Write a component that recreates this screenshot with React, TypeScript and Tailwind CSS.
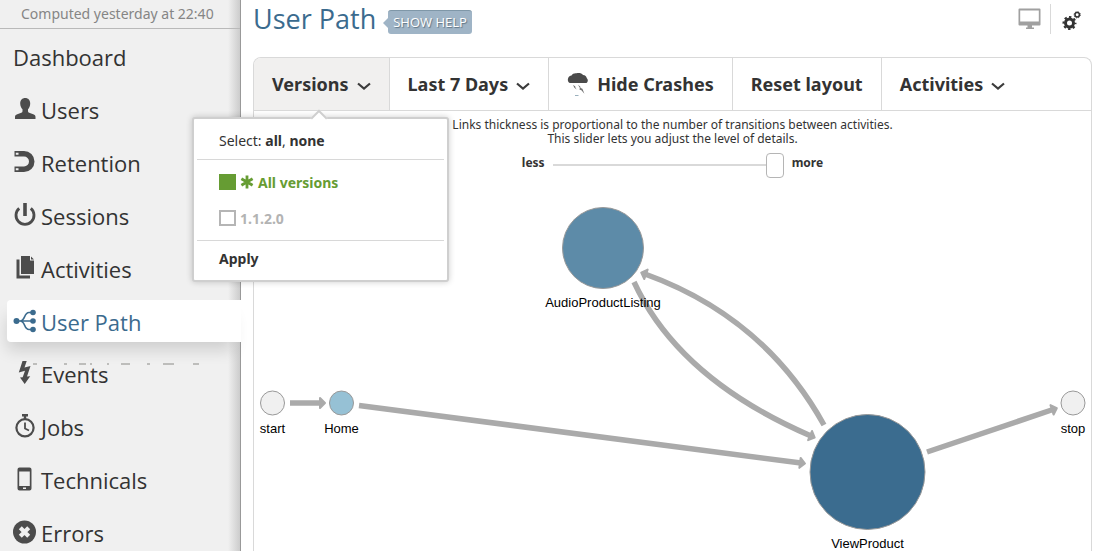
import React, { useState } from "react";

type IconProps = { className?: string };

const UserIcon = ({ className }: IconProps) => (
  <svg viewBox="0 0 24 24" className={className} fill="currentColor" aria-hidden="true">
    <path d="M12.200 1c3 0 5 2.200 5 5.500 0 2.300-.9 4.500-2.200 5.700v2c0 .7.4 1.200 1.200 1.500l4 1.500c1.600.6 2.300 1.400 2.300 2.800V22H2v-2c0-1.400.7-2.200 2.300-2.800l4-1.500c.8-.3 1.200-.8 1.200-1.500v-2c-1.300-1.200-2.300-3.400-2.300-5.700C7.200 3.200 9.200 1 12.200 1z" />
  </svg>
);

const MagnetIcon = ({ className }: IconProps) => (
  <svg viewBox="0 0 24 24" className={className} fill="currentColor" aria-hidden="true">
    <path d="M1.500 1H11a10.500 10.500 0 0 1 0 21H1.500v-5.500H11a5 5 0 0 0 0-10H1.500z" />
    <path d="M2.800 2.800h2.700v2H2.800zM2.800 18.200h2.700v2H2.800z" fill="#efefef" />
  </svg>
);

const PowerIcon = ({ className }: IconProps) => (
  <svg viewBox="0 0 24 24" className={className} fill="none" stroke="currentColor" aria-hidden="true">
    <path d="M6.200 5.400a9 9 0 1 0 11.600 0" strokeWidth="2.800" />
    <path d="M12 0v13" strokeWidth="3.600" />
  </svg>
);

const FilesIcon = ({ className }: IconProps) => (
  <svg viewBox="0 0 24 24" className={className} fill="currentColor" aria-hidden="true">
    <path d="M8 0h9v4.500H21V18H8z" />
    <path d="M18 .5L21 3.500h-3z" />
    <path d="M3.500 3.500h3v16H17v3H3.500z" />
  </svg>
);

const PathIcon = ({ className }: IconProps) => (
  <svg viewBox="0 0 24 24" className={className} fill="currentColor" aria-hidden="true">
    <path d="M4 12h16M7 12c2.500 0 3.500-1.500 4.600-4.200S14.200 3.500 16 3.500h4M7 12c2.500 0 3.500 1.500 4.600 4.200s2.600 4.300 4.400 4.300h4" fill="none" stroke="currentColor" strokeWidth="1.700" />
    <circle cx="3.500" cy="12" r="3" />
    <circle cx="20" cy="3.500" r="2.800" />
    <circle cx="20" cy="12" r="2.800" />
    <circle cx="20" cy="20.500" r="2.800" />
  </svg>
);

const BoltIcon = ({ className }: IconProps) => (
  <svg viewBox="0 0 24 24" className={className} fill="currentColor" aria-hidden="true">
    <path d="M9.500 0h4.200l-2.200 6.500 6-1.500-3.500 10.500 3.200-.2-5.500 7.700-4.700-6.500 2.700-.3L12 9.800l-6.200 1.600z" />
  </svg>
);

const StopwatchIcon = ({ className }: IconProps) => (
  <svg viewBox="0 0 24 24" className={className} fill="none" stroke="currentColor" aria-hidden="true">
    <circle cx="12" cy="13.800" r="8.600" strokeWidth="2.200" />
    <path d="M9 1.200h6M12 1v4" strokeWidth="2.400" />
    <path d="M12 8.500v6l4 2" strokeWidth="1.800" />
  </svg>
);

const PhoneIcon = ({ className }: IconProps) => (
  <svg viewBox="0 0 24 24" className={className} fill="currentColor" aria-hidden="true">
    <path fillRule="evenodd" d="M6.500 0.500h10a2 2 0 0 1 2 2v19a2 2 0 0 1-2 2h-10a2 2 0 0 1-2-2v-19a2 2 0 0 1 2-2zM6.200 4.500v14.500h10.600V4.500zM10 20.500v1.500h3v-1.500z" />
  </svg>
);

const ErrorIcon = ({ className }: IconProps) => (
  <svg viewBox="0 0 24 24" className={className} aria-hidden="true">
    <circle cx="11.500" cy="12" r="11.500" fill="currentColor" />
    <path d="M7.300 7.800l8.400 8.400M15.700 7.800l-8.400 8.400" stroke="#efefef" strokeWidth="4.200" />
  </svg>
);

const ChevronIcon = () => (
  <svg viewBox="0 0 14 10" className="mt-1 h-[10px] w-[14px]" fill="none" stroke="#3c3c3c" strokeWidth="2.200" aria-hidden="true">
    <path d="M1 2.500l6 5 6-5" />
  </svg>
);

const StormIcon = () => (
  <svg viewBox="0 0 22 24" className="h-6 w-[22px]" aria-hidden="true">
    <path fill="#4a4a4a" d="M3 11C.8 10.500.5 7.500 1.200 6 1.800 4.300 3 3.600 4.500 3.500 5.500 1.700 7.500 1 9.500 1.300c2.500-.6 5-.3 6.500 1.700 2.200 0 3.600 1.500 3.700 3C21.300 7.200 21.200 10 19.500 11z" />
    <path fill="#707070" d="M6 13l2.200 1.200.2 1.200 1.200 2.200-2.200-1.800zM11 12.800l2.200 1.600.4 1.700 1.800.6 2 5-3-3.400-2-.8.500-1.400z" />
    <path stroke="#9ab0bd" d="M8 23.500h3.500" />
  </svg>
);

const MonitorIcon = () => (
  <svg viewBox="0 0 24 22" className="h-[22px] w-6" fill="#a0a0a0" aria-hidden="true">
    <path fillRule="evenodd" d="M1.500 0.500h20a1 1 0 0 1 1 1v15a1 1 0 0 1-1 1H14v2h2V21H8v-1.500h1.500v-2h-8a1 1 0 0 1-1-1v-15a1 1 0 0 1 1-1zM2.200 2.500v11h18.600v-11z" />
  </svg>
);

const CogsIcon = () => (
  <svg viewBox="0 0 20 20" className="size-5" fill="none" stroke="#333333" aria-hidden="true">
    <circle cx="7.500" cy="13" r="4" strokeWidth="3" />
    <circle cx="7.500" cy="13" r="6" strokeWidth="2" strokeDasharray="2.400 2.310" strokeDashoffset="1.200" />
    <circle cx="15.200" cy="4.800" r="2.200" strokeWidth="1.500" />
    <circle cx="15.200" cy="4.800" r="3.100" strokeWidth="1" strokeDasharray="1.220 1.220" />
  </svg>
);

const AsteriskIcon = () => (
  <svg viewBox="0 0 14 14" className="size-[14px]" stroke="#669c33" strokeWidth="2.800" aria-hidden="true">
    <path d="M7 0.500v13M1.400 3.700l11.200 6.600M12.600 3.700L1.400 10.300" />
  </svg>
);

const navItems: { label: string; Icon?: React.FC<IconProps> }[] = [
  { label: "Dashboard" },
  { label: "Users", Icon: UserIcon },
  { label: "Retention", Icon: MagnetIcon },
  { label: "Sessions", Icon: PowerIcon },
  { label: "Activities", Icon: FilesIcon },
  { label: "User Path", Icon: PathIcon },
  { label: "Events", Icon: BoltIcon },
  { label: "Jobs", Icon: StopwatchIcon },
  { label: "Technicals", Icon: PhoneIcon },
  { label: "Errors", Icon: ErrorIcon },
];

const Sidebar = () => (
  <aside className="relative w-[241px] shrink-0 border-r border-[#999999] bg-[#f0f0f0]">
    <div className="absolute inset-y-0 right-0 w-3 bg-linear-to-r from-transparent to-[#cccccc]" />
    <p className="relative h-[29px] border-b border-[#b9b9b9] pl-[21px] text-[14px] leading-[27px] text-[#858585]">
      Computed yesterday at 22:40
    </p>
    <nav className="relative -mr-px pt-[6px] font-['Open_Sans',sans-serif]">
      <ul className="flex flex-col gap-[11px]">
        {navItems.map(({ label, Icon }) => {
          const active = label === "User Path";
          return (
            <li key={label} className={label === "Events" ? "relative -mt-px pl-[7px]" : "relative pl-[7px]"}>
              {label === "Events" && (
                <svg viewBox="0 0 180 2" className="absolute top-[11px] left-8 h-[2px] w-[180px]" stroke="#8a8a86" aria-hidden="true">
                  <path d="M1 1h4M32 1h3M47 1h7M58 1h2M75 1h2M89 1h9M115 1h3M131 1h11M161 1h6" />
                </svg>
              )}
              <a
                href="#"
                aria-current={active ? "page" : undefined}
                className={
                  active
                    ? "flex h-[42px] items-center gap-1 rounded-l-[4px] bg-white pl-[6px] text-[22px] text-[#3b6b8e] shadow-[-4px_12px_16px_-4px_rgba(0,0,0,0.14)]"
                    : "flex h-[42px] items-center gap-1 pl-[6px] text-[22px] text-[#333333]"
                }
              >
                {Icon && <Icon className={active ? "size-6" : "size-6 text-[#4c4c4c]"} />}
                <span className="pt-[2px]">{label}</span>
              </a>
            </li>
          );
        })}
      </ul>
    </nav>
  </aside>
);

const VersionsMenu = () => {
  const [all, setAll] = useState(true);
  const [single, setSingle] = useState(false);
  const box =
    "h-4 w-[17px] appearance-none border-2 border-[#b5b5b5] bg-white checked:border-[#669c33] checked:bg-[#669c33]";
  return (
    <div className="absolute top-[59px] -left-[62px] z-10 w-[257px] rounded-[3px] border-2 border-[#cfcfcf] bg-white px-[3px] text-[14px] font-normal text-[#333333] shadow-[0_0_6px_rgba(0,0,0,0.2)]">
      <div className="absolute -top-[7px] left-[119px] size-[12px] rotate-45 border-t-2 border-l-2 border-[#cfcfcf] bg-white" />
      <div className="relative h-[41px] border-b border-[#d8d8d8] pl-[22px] leading-[44px]">
        Select: <button type="button" className="font-bold" onClick={() => { setAll(true); setSingle(true); }}>all</button>,{" "}
        <button type="button" className="font-bold" onClick={() => { setAll(false); setSingle(false); }}>none</button>
      </div>
      <div className="flex h-[81px] flex-col gap-[14px] border-b border-[#d8d8d8] pt-[11px] pl-[22px] font-bold">
        <label className="flex h-[22px] items-center gap-1 text-[#669c33]">
          <input type="checkbox" className={box} checked={all} onChange={() => setAll(!all)} />
          <AsteriskIcon />
          All versions
        </label>
        <label className="flex h-[22px] items-center gap-1 text-[#b3b3b3]">
          <input type="checkbox" className={box} checked={single} onChange={() => setSingle(!single)} />
          1.1.2.0
        </label>
      </div>
      <button type="button" className="block h-[39px] pb-1 pl-[22px] font-bold">Apply</button>
    </div>
  );
};

const Toolbar = () => {
  const item = "flex h-[52px] items-center gap-2 px-[18px]";
  return (
    <div className="flex border-b border-[#d9d9d9] text-[18px] font-bold whitespace-nowrap text-[#333333]">
      <div className="relative rounded-tl-[7px] border-r border-[#d9d9d9] bg-[#f1f0ef]">
        <button type="button" aria-expanded="true" className={item}>Versions <ChevronIcon /></button>
        <VersionsMenu />
      </div>
      <button type="button" className={`${item} border-r border-[#d9d9d9]`}>Last 7 Days <ChevronIcon /></button>
      <button type="button" className={`${item} border-r border-[#d9d9d9]`}><StormIcon /> Hide Crashes</button>
      <button type="button" className={`${item} border-r border-[#d9d9d9]`}>Reset layout</button>
      <button type="button" className={item}>Activities <ChevronIcon /></button>
    </div>
  );
};

const nodes = [
  { label: "start", x: 18.5, y: 292, r: 12, fill: "#f0f0f0", labelY: 322 },
  { label: "Home", x: 87.5, y: 292, r: 12, fill: "#96c1d5", labelY: 322 },
  { label: "AudioProductListing", x: 349, y: 137, r: 40.5, fill: "#5d8ba8", labelY: 196 },
  { label: "ViewProduct", x: 613.5, y: 361, r: 57.5, fill: "#3b6c8f", labelY: 437 },
  { label: "stop", x: 819, y: 292, r: 12, fill: "#f0f0f0", labelY: 322 },
];

const edges = [
  "M36 292H67",
  "M105 294.500L547 352",
  "M380 171Q425 268 557 325",
  "M570 314Q510 206 391 163",
  "M673 341L799 298.500",
];

const Graph = () => (
  <svg viewBox="0 0 837 440" className="absolute inset-x-0 top-0 w-full" role="img" aria-label="User path graph">
    <defs>
      <marker id="head" markerUnits="userSpaceOnUse" markerWidth="10" markerHeight="14" viewBox="-2 -7 10 14" refX="1" refY="0" orient="auto">
        <path d="M0-5L5 0L0 5z" fill="#aaaaaa" stroke="#aaaaaa" strokeWidth="2" strokeLinejoin="round" />
      </marker>
    </defs>
    {edges.map((d) => (
      <path key={d} d={d} fill="none" stroke="#aaaaaa" strokeWidth="5.500" markerEnd="url(#head)" />
    ))}
    {nodes.map((n) => (
      <g key={n.label}>
        <circle cx={n.x} cy={n.y} r={n.r} fill={n.fill} stroke="#999999" />
        <text x={n.x} y={n.labelY} textAnchor="middle" className="fill-black font-['Liberation_Sans',Arial,sans-serif] text-[13px]">
          {n.label}
        </text>
      </g>
    ))}
  </svg>
);

const DetailSlider = () => {
  const [level, setLevel] = useState(100);
  return (
    <div className="relative pt-[7px] text-center text-[12px] leading-[14px] text-[#333333]">
      <p>
        Links thickness is proportional to the number of transitions between activities.
        <br />
        This slider lets you adjust the level of details.
      </p>
      <div className="mt-[6px] flex items-center justify-center gap-2 font-bold">
        <span className="pb-1">less</span>
        <input
          type="range"
          aria-label="Level of details"
          value={level}
          onChange={(e) => setLevel(Number(e.target.value))}
          className="h-[26px] w-[231px] appearance-none bg-transparent [&::-webkit-slider-runnable-track]:h-[2px] [&::-webkit-slider-runnable-track]:bg-[#d9d9d9] [&::-webkit-slider-thumb]:-mt-[11px] [&::-webkit-slider-thumb]:h-[25px] [&::-webkit-slider-thumb]:w-[18px] [&::-webkit-slider-thumb]:appearance-none [&::-webkit-slider-thumb]:rounded-[4px] [&::-webkit-slider-thumb]:border [&::-webkit-slider-thumb]:border-[#b5b5b5] [&::-webkit-slider-thumb]:bg-white"
        />
        <span className="pb-1">more</span>
      </div>
    </div>
  );
};

export default function App() {
  return (
    <div className="flex h-screen overflow-hidden bg-white font-['Noto_Sans',sans-serif]">
      <Sidebar />
      <main className="flex min-w-0 flex-1 flex-col pr-1 pl-3">
        <header className="flex h-[57px] items-start">
          <h1 className="font-['Open_Sans',sans-serif] text-[27px] leading-[38px] text-[#3b6b8e]">User Path</h1>
          <button
            type="button"
            className="relative mt-[10px] ml-3 h-6 rounded-[3px] border-t border-[#7f97a8] bg-[#9fb4c6] px-[5px] font-['Open_Sans',sans-serif] text-[13px] leading-[23px] text-white [text-shadow:1px_1px_1px_#5f7484]"
          >
            <svg viewBox="0 0 5 10" className="absolute top-[7px] -left-[5px] h-[10px] w-[5px]" fill="#9fb4c6" aria-hidden="true">
              <path d="M5 0v10L0 5z" />
            </svg>
            SHOW HELP
          </button>
          <div className="mt-1 mr-[10px] ml-auto flex h-[30px] items-center">
            <button type="button" aria-label="Full screen" className="pr-2">
              <MonitorIcon />
            </button>
            <button type="button" aria-label="Settings" className="flex h-full items-center border-l border-[#d9d9d9] pt-[2px] pl-[11px]">
              <CogsIcon />
            </button>
          </div>
        </header>
        <section className="flex flex-1 flex-col rounded-t-[8px] border border-b-0 border-[#d9d9d9]">
          <Toolbar />
          <div className="relative flex-1">
            <Graph />
            <DetailSlider />
          </div>
        </section>
      </main>
    </div>
  );
}
